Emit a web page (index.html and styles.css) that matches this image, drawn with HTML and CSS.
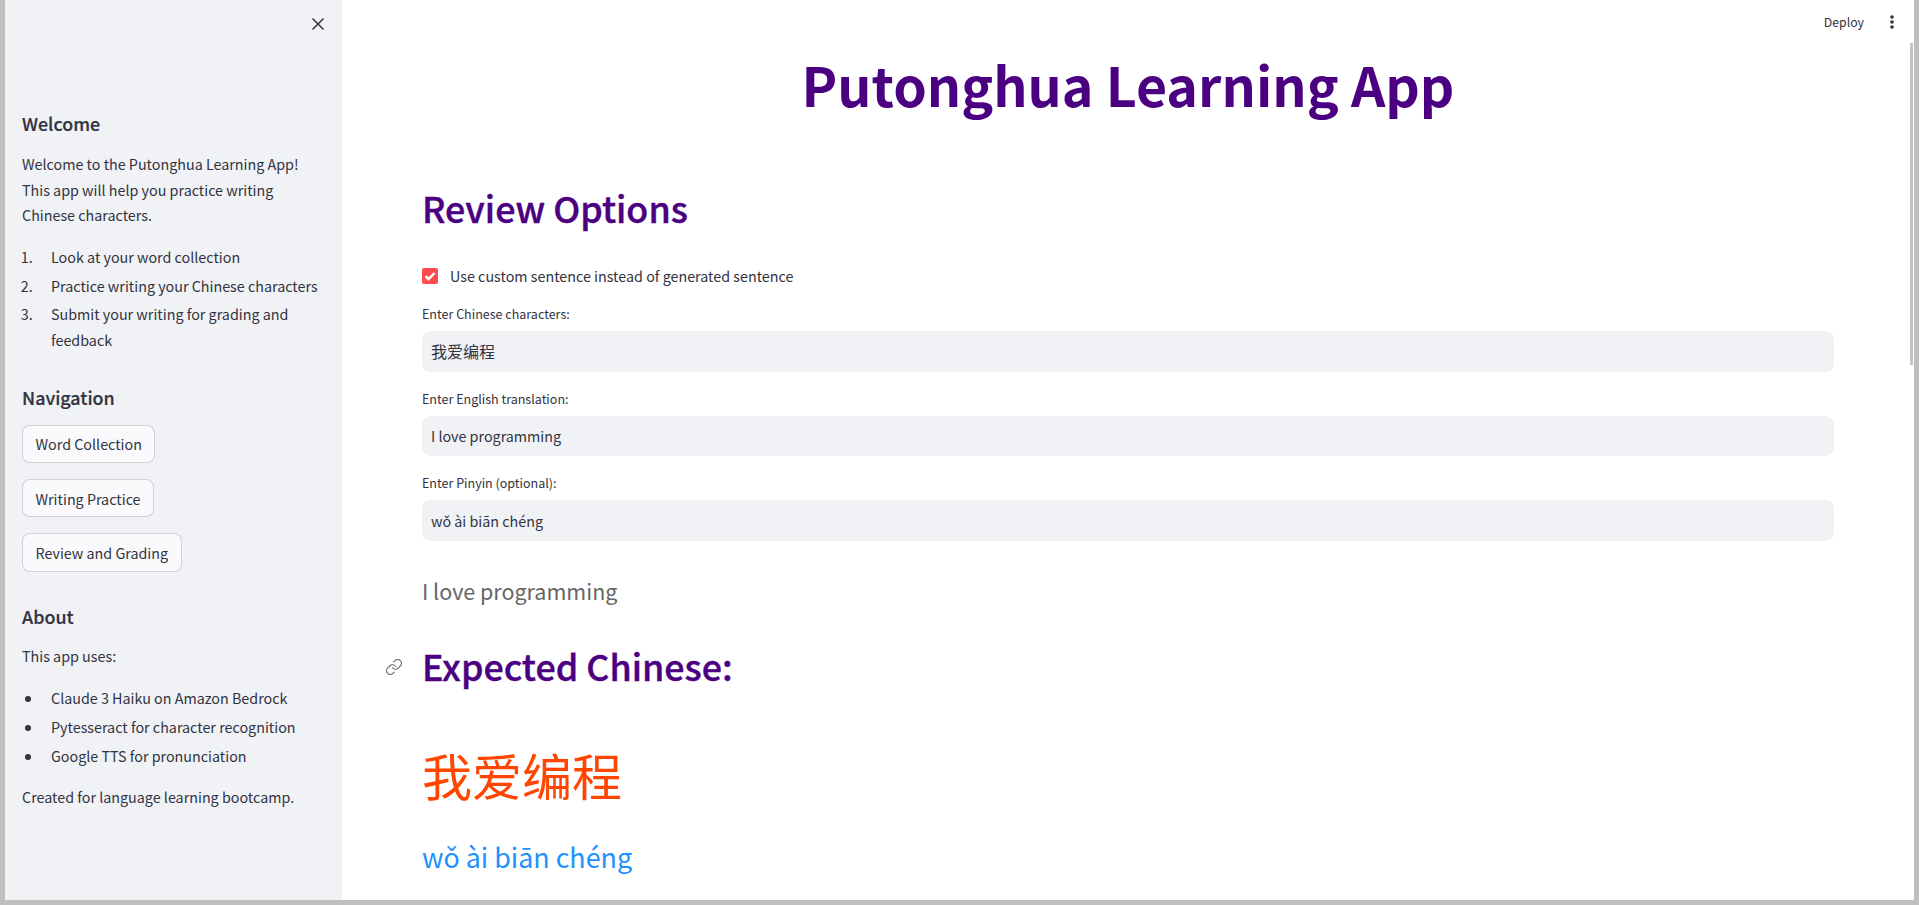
FILE: index.html
```html
<!DOCTYPE html>
<html lang="en">
<head>
    <meta charset="utf-8">
    <title>Putonghua Learning App</title>
    <link rel="stylesheet" href="styles.css">
</head>
<body>
    <div class="app">
        <aside class="sidebar">
            <button class="close-btn" aria-label="Close sidebar">
                <svg width="14" height="14" viewBox="0 0 14 14"><path d="M1.5 1.5l11 11M12.5 1.5l-11 11"/></svg>
            </button>

            <h3 class="side-title first">Welcome</h3>
            <p class="side-text">Welcome to the Putonghua Learning App! This app will help you practice writing Chinese characters.</p>
            <ol class="side-list steps">
                <li>Look at your word collection</li>
                <li>Practice writing your Chinese characters</li>
                <li>Submit your writing for grading and feedback</li>
            </ol>

            <h3 class="side-title">Navigation</h3>
            <div class="nav-buttons">
                <button class="nav-btn">Word Collection</button>
                <button class="nav-btn">Writing Practice</button>
                <button class="nav-btn">Review and Grading</button>
            </div>

            <h3 class="side-title">About</h3>
            <p class="side-text">This app uses:</p>
            <ul class="side-list uses">
                <li>Claude 3 Haiku on Amazon Bedrock</li>
                <li>Pytesseract for character recognition</li>
                <li>Google TTS for pronunciation</li>
            </ul>
            <p class="side-text created">Created for language learning bootcamp.</p>
        </aside>

        <main class="main">
            <div class="toolbar">
                <span class="deploy">Deploy</span>
                <svg class="menu-dots" width="6" height="16" viewBox="0 0 6 16"><circle cx="3" cy="3" r="1.8"/><circle cx="3" cy="8" r="1.8"/><circle cx="3" cy="13" r="1.8"/></svg>
            </div>
            <div class="scroll-thumb"></div>

            <h1 class="page-title">Putonghua Learning App</h1>
            <h2 class="section-title">Review Options</h2>

            <label class="check-row">
                <span class="check-box">
                    <svg width="14" height="14" viewBox="0 0 14 14"><path d="M2.5 7.2l3 3 6-6.2"/></svg>
                </span>
                Use custom sentence instead of generated sentence
            </label>

            <div class="field">
                <label class="field-label">Enter Chinese characters:</label>
                <div class="field-input hanzi-input">我爱编程</div>
            </div>
            <div class="field">
                <label class="field-label">Enter English translation:</label>
                <div class="field-input">I love programming</div>
            </div>
            <div class="field">
                <label class="field-label">Enter Pinyin (optional):</label>
                <div class="field-input">wǒ ài biān chéng</div>
            </div>

            <p class="translation">I love programming</p>

            <h2 class="expected">
                <svg class="anchor-icon" width="18" height="18" viewBox="0 0 24 24"><path d="M10 13a5 5 0 0 0 7.54.54l3-3a5 5 0 0 0-7.07-7.07l-1.72 1.71"/><path d="M14 11a5 5 0 0 0-7.54-.54l-3 3a5 5 0 0 0 7.07 7.07l1.71-1.71"/></svg>
                Expected Chinese:
            </h2>
            <p class="hanzi">我爱编程</p>
            <p class="pinyin">wǒ ài biān chéng</p>
        </main>
    </div>
</body>
</html>
```

FILE: styles.css
```css
* {
    box-sizing: border-box;
}

html, body {
    height: 100%;
}

/* the latin glyphs of this font run about 12% large, so sizes below are scaled down to fit */
body {
    margin: 0;
    padding: 0 5px 5px 5px;
    background-color: #bfbfbf;
    color: #31333f;
    font-family: "Noto Sans CJK SC", "Noto Sans", sans-serif;
    font-size: 14.32px;
    overflow: hidden;
}

.app {
    display: flex;
    height: 100%;
    background-color: #fff;
}

/* sidebar */
.sidebar {
    position: relative;
    flex: 0 0 337px;
    padding: 111px 17px 0 17px;
    background-color: #f0f2f6;
}

.close-btn {
    position: absolute;
    top: 17px;
    right: 17px;
    padding: 0;
    border: none;
    background: none;
    line-height: 0;
}

.close-btn path {
    fill: none;
    stroke: #31333f;
    stroke-width: 1.5;
}

.side-title {
    margin: 32px 0 0 0;
    font-size: 17.9px;
    font-weight: 500;
    line-height: 24px;
    -webkit-text-stroke: 0.2px currentColor;
}

.side-title.first {
    margin: 0 0 16px 0;
}

.side-title.first + .side-text {
    margin-top: 0;
}

.side-text {
    margin: 15px 0 0 0;
    line-height: 25.6px;
}

.side-list {
    margin: 16px 0 0 0;
    padding-left: 14px;
    line-height: 25.6px;
}

.side-list li {
    padding-left: 15px;
}

.side-list li + li {
    margin-top: 3.2px;
}

.uses {
    margin-top: 17px;
    padding-left: 21px;
}

.uses li {
    padding-left: 8px;
}

.created {
    margin-top: 16px;
}

.nav-buttons {
    display: flex;
    flex-direction: column;
    align-items: flex-start;
    gap: 16px;
    margin-top: 16px;
}

.nav-btn {
    height: 38.4px;
    padding: 0 12.5px;
    border: 1px solid rgba(49, 51, 63, 0.2);
    border-radius: 8px;
    background-color: #fafafc;
    color: #31333f;
    font-family: inherit;
    font-size: 14.32px;
}

/* main area */
.main {
    position: relative;
    flex: 1;
    padding: 48px 80px 0 80px;
    overflow: hidden;
}

.toolbar {
    position: absolute;
    top: 12px;
    right: 19px;
    display: flex;
    align-items: center;
    gap: 25px;
}

.deploy {
    font-size: 12.3px;
    line-height: 20px;
}

.menu-dots {
    fill: #31333f;
}

.scroll-thumb {
    position: absolute;
    top: 43px;
    right: 1px;
    width: 3px;
    height: 322px;
    background-color: #c4c4c4;
}

.page-title {
    margin: 0;
    color: #4b0082;
    font-size: 53.7px;
    font-weight: 700;
    line-height: 72px;
    text-align: center;
}

.section-title {
    margin: 63px 0 0 0;
    color: #4b0082;
    font-size: 35.8px;
    font-weight: 500;
    line-height: 48px;
    -webkit-text-stroke: 0.4px currentColor;
}

.check-row {
    display: flex;
    align-items: center;
    gap: 12px;
    height: 24px;
    margin-top: 33px;
    line-height: 24px;
}

.check-box {
    display: flex;
    align-items: center;
    justify-content: center;
    width: 16px;
    height: 16px;
    border-radius: 2px;
    background-color: #ff4b4b;
}

.check-box path {
    fill: none;
    stroke: #fff;
    stroke-width: 2.4;
}

.field {
    margin-top: 16px;
}

.field + .field {
    margin-top: 17px;
}

.field-label {
    display: block;
    height: 27px;
    font-size: 12.53px;
    line-height: 20px;
}

.field-input {
    display: flex;
    align-items: center;
    height: 40.5px;
    padding: 0 9px;
    border-radius: 8px;
    background-color: #f0f2f6;
}

.hanzi-input {
    font-size: 16px;
}

.translation {
    margin: 35px 0 0 0;
    color: #666;
    font-size: 21.5px;
    line-height: 29px;
}

.expected {
    position: relative;
    margin: 38px 0 0 0;
    color: #4b0082;
    font-size: 35.8px;
    font-weight: 500;
    line-height: 44px;
    -webkit-text-stroke: 0.4px currentColor;
}

.anchor-icon {
    position: absolute;
    left: -37px;
    top: 15px;
    fill: none;
    stroke: #6b6d76;
    stroke-width: 1.6;
    stroke-linecap: round;
    stroke-linejoin: round;
}

.hanzi {
    margin: 52px 0 0 0;
    color: #ff4500;
    font-size: 50px;
    line-height: 70px;
}

.pinyin {
    margin: 30px 0 0 0;
    color: #1e90ff;
    font-size: 26.85px;
    line-height: 36px;
}
```
